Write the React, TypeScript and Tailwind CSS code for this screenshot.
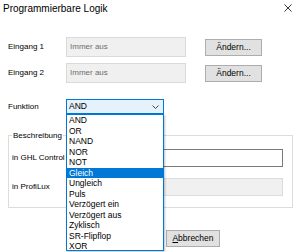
import React from "react";

const options = [
  "AND",
  "OR",
  "NAND",
  "NOR",
  "NOT",
  "Gleich",
  "Ungleich",
  "Puls",
  "Verzögert ein",
  "Verzögert aus",
  "Zyklisch",
  "SR-Flipflop",
  "XOR",
];

function WinButton({ children, className = "" }: { children: React.ReactNode; className?: string }) {
  return (
    <button
      className={
        "h-[17px] bg-[#e1e1e1] border border-[#adadad] text-[8.5px] leading-none text-black flex items-center justify-center " +
        className
      }
    >
      {children}
    </button>
  );
}

export default function App() {
  return (
    <div className="relative w-[300px] h-[252px] overflow-hidden bg-white text-black font-['Liberation_Sans',Arial,sans-serif]">
      {/* title bar */}
      <div className="h-[18px] flex items-center justify-between pl-[3px] pr-[8px]">
        <span className="text-[10px] leading-none">Programmierbare Logik</span>
        <svg width="8" height="8" viewBox="0 0 8 8" className="mt-[-2px]">
          <path d="M0.5 0.5 L7.5 7.5 M7.5 0.5 L0.5 7.5" stroke="#333" strokeWidth="1" />
        </svg>
      </div>

      <div className="pl-[8px]">
        {/* Eingang 1 */}
        <div className="mt-[19px] h-[20px] flex items-center">
          <span className="w-[58px] text-[8px]">Eingang 1</span>
          <div className="w-[120px] h-[20px] bg-[#f0f0f0] border border-[#dadada] flex items-center pl-[3px] text-[8px] text-[#6d6d6d]">
            Immer aus
          </div>
          <WinButton className="ml-[19px] w-[57px]">Ändern...</WinButton>
        </div>

        {/* Eingang 2 */}
        <div className="mt-[6px] h-[20px] flex items-center">
          <span className="w-[58px] text-[8px]">Eingang 2</span>
          <div className="w-[120px] h-[20px] bg-[#f0f0f0] border border-[#dadada] flex items-center pl-[3px] text-[8px] text-[#6d6d6d]">
            Immer aus
          </div>
          <WinButton className="ml-[19px] w-[57px]">Ändern...</WinButton>
        </div>

        {/* Funktion */}
        <div className="mt-[16px] h-[15px] flex items-center">
          <span className="w-[58px] text-[8px]">Funktion</span>
          <div className="w-[98px] h-[15px] bg-[#e5f1fb] border border-[#0078d7] flex items-center justify-between pl-[2px] pr-[4px] text-[8.5px]">
            <span>AND</span>
            <svg width="7" height="4" viewBox="0 0 7 4">
              <path d="M0.5 0.5 L3.5 3.5 L6.5 0.5" stroke="#444" strokeWidth="1" fill="none" />
            </svg>
          </div>
        </div>

        {/* Beschreibung group */}
        <div className="relative mt-[21px] w-[285px] h-[73px] border border-[#dcdcdc]">
          <span className="absolute left-[3px] top-[-6px] px-[1px] bg-white text-[8px] leading-[12px]">Beschreibung</span>
          <div className="mt-[13px] h-[18px] flex items-center">
            <span className="w-[57px] pl-[3px] text-[8px] whitespace-nowrap">in GHL Control</span>
            <div className="w-[217px] h-[18px] bg-white border border-[#7a7a7a]" />
          </div>
          <div className="mt-[11px] h-[18px] flex items-center">
            <span className="w-[57px] pl-[3px] text-[8px] whitespace-nowrap">in ProfiLux</span>
            <div className="w-[217px] h-[18px] bg-[#f0f0f0] border border-[#dcdcdc]" />
          </div>
        </div>

        {/* dialog buttons */}
        <div className="mt-[22px] flex gap-[6px] pl-[98px]">
          <WinButton className="w-[54px]">OK</WinButton>
          <WinButton className="w-[54px]">
            <span>
              <span className="underline">A</span>bbrechen
            </span>
          </WinButton>
        </div>
      </div>

      {/* open dropdown list */}
      <div className="absolute left-[66px] top-[114px] w-[98px] h-[137px] bg-white border border-[#0078d7] shadow-[1px_1px_2px_rgba(0,0,0,0.25)]">
        {options.map((o) => (
          <div
            key={o}
            className={
              "h-[10.5px] leading-[10.5px] pl-[2px] text-[8.5px] whitespace-nowrap " +
              (o === "Gleich" ? "bg-[#0078d7] text-white" : "text-black")
            }
          >
            {o}
          </div>
        ))}
      </div>
    </div>
  );
}
